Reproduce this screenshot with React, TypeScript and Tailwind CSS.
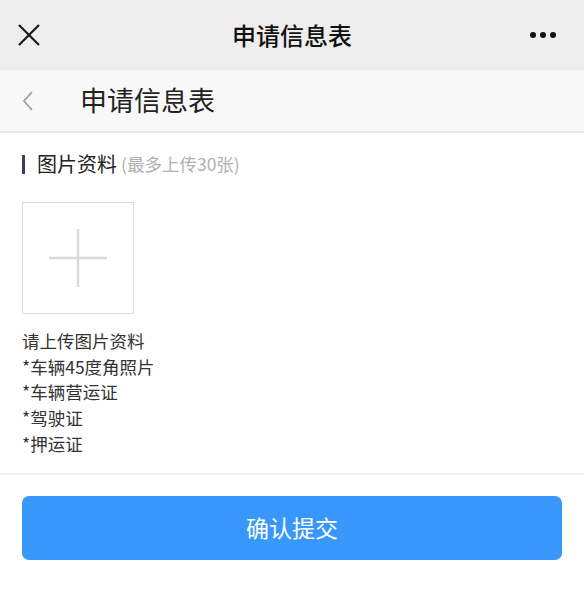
import * as React from "react";

const FONT = { fontFamily: '"Noto Sans CJK SC", "Noto Sans", sans-serif' };

const docs = ["请上传图片资料", "*车辆45度角照片", "*车辆营运证", "*驾驶证", "*押运证"];

export default function App() {
  return (
    <div className="flex h-[594px] w-[584px] flex-col bg-white text-[#333]" style={FONT}>
      {/* top title bar */}
      <div className="grid h-[70px] grid-cols-[1fr_auto_1fr] items-center bg-[#ededed] px-[17px]">
        <svg width="24" height="24" viewBox="0 0 24 24" className="text-[#1a1a1a]">
          <path d="M2 2 L22 22 M22 2 L2 22" stroke="currentColor" strokeWidth="2.2" fill="none" />
        </svg>
        <span className="text-[24px] font-medium text-[#111]">申请信息表</span>
        <div className="mr-[11px] flex items-center justify-end gap-[4px]">
          <span className="size-[6px] rounded-full bg-[#111]" />
          <span className="size-[6px] rounded-full bg-[#111]" />
          <span className="size-[6px] rounded-full bg-[#111]" />
        </div>
      </div>

      {/* page header */}
      <div className="flex h-[63px] items-center border-b-2 border-[#e8e8e8] bg-[#f8f8f8] pl-[22px]">
        <svg width="12" height="20" viewBox="0 0 12 20" className="text-[#999]">
          <path d="M10 1 L2 10 L10 19" stroke="currentColor" strokeWidth="1.6" fill="none" />
        </svg>
        <span className="ml-[46px] text-[27px] text-[#222]">申请信息表</span>
      </div>

      {/* section */}
      <div className="flex flex-col px-[22px] pt-[18px]">
        <div className="flex items-center">
          <span className="h-[19px] w-[3px] bg-[#3b4150]" />
          <span className="ml-[12px] text-[20px] leading-[26px] text-[#222]">图片资料</span>
          <span className="ml-[4px] text-[17.5px] leading-[26px] text-[#b0b0b0]">(最多上传30张)</span>
        </div>

        <div className="mt-[25px] flex size-[112px] items-center justify-center border border-[#dcdcdc]">
          <svg width="60" height="60" viewBox="0 0 60 60">
            <path d="M1 30 H59 M30 1 V59" stroke="#d9d9d9" strokeWidth="2.4" fill="none" />
          </svg>
        </div>

        <div className="mt-[14px] flex flex-col">
          {docs.map((d) => (
            <span key={d} className="text-[17.5px] leading-[25.7px] text-[#333]">
              {d}
            </span>
          ))}
        </div>
      </div>

      <div className="mt-[16px] h-[2px] bg-[#f2f2f2]" />

      <div className="px-[22px] pt-[21px]">
        <button className="flex h-[64px] w-full items-center justify-center rounded-[7px] bg-[#3897fb] text-[23px] text-white">
          确认提交
        </button>
      </div>
    </div>
  );
}
